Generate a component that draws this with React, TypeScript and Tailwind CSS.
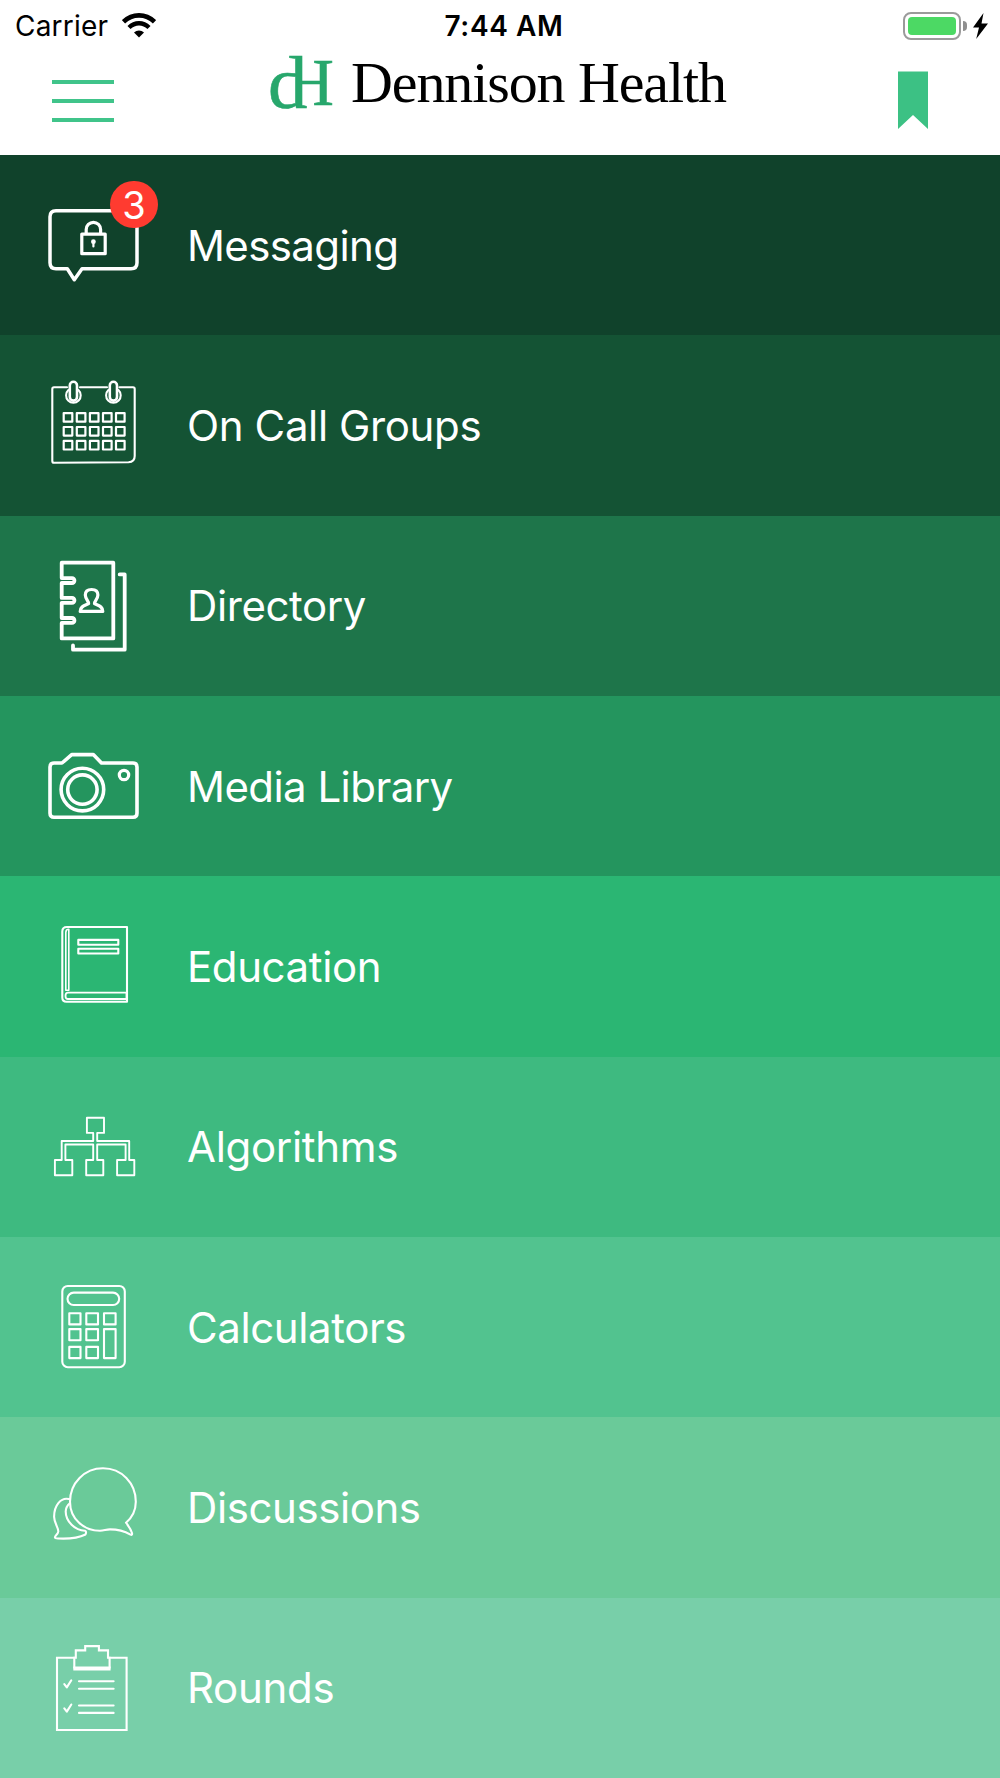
import React from 'react';

type IconProps = { children: React.ReactNode; stroke?: number };

const Icon: React.FC<IconProps> = ({ children, stroke = 2.1 }) => (
  <svg
    viewBox="0 -0.5 100 100"
    className="h-[100px] w-[100px] shrink-0 overflow-visible"
    fill="none"
    stroke="white"
    strokeWidth={stroke}
    strokeLinejoin="round"
    strokeLinecap="round"
  >
    {children}
  </svg>
);

const MessagingIcon = () => (
  <Icon stroke={3.5}>
    <path d="M16 15.3H91Q97 15.3 97 21.3V67.3Q97 73.3 91 73.3H42L34.3 84.2L27.3 73.3H16Q10 73.3 10 67.3V21.3Q10 15.3 16 15.3Z" />
    <g strokeWidth={3.2}>
      <rect x="41.8" y="38.6" width="23.4" height="19.6" />
      <path d="M46.2 38V34A7.2 7.2 0 0 1 60.6 34V38" />
    </g>
    <circle cx="53.4" cy="46.2" r="2.4" fill="white" stroke="none" />
    <path d="M53.4 47V51" strokeWidth={2.2} />
  </Icon>
);

const CalendarIcon = () => (
  <Icon>
    <path d="M27 11.8H14Q12.3 11.8 12.3 13.5V85.5Q12.3 87.3 14 87.3L88.5 86.8Q94.7 86.5 94.7 80.5V13.5Q94.7 11.8 93 11.8H79.5M40 11.8H67" />
    {[33.4, 73.4].map((x) => (
      <g key={x}>
        <rect x={x - 3.6} y="6.3" width="7.2" height="18.8" rx="3.6" strokeWidth={2.6} />
        <path d={`M${x - 5} 14.5A7.3 7.3 0 1 0 ${x + 5} 14.5`} />
      </g>
    ))}
    {[37.6, 51.5, 65.4].map((y) =>
      [23.7, 36.8, 49.9, 63, 76].map((x) => (
        <rect key={`${x}-${y}`} x={x} y={y} width="8.6" height="8.6" strokeWidth={2.2} />
      ))
    )}
  </Icon>
);

const DirectoryIcon = () => (
  <Icon stroke={3.8}>
    <path d="M32 21.6H21.7V6.2H73.3V81.9H21.7V66.4H32A2.45 2.45 0 0 0 32 61.5H21.7V46.3H32A2.45 2.45 0 0 0 32 41.4H21.7V26.5H32A2.45 2.45 0 0 0 32 21.6" />
    <path d="M79.7 17.9H84.7V93.2H33V89" />
    <path
      d="M40.2 54.9H62.8C62.8 49.5 58 49 54.4 47C53.8 45.5 57.9 43 57.9 38.6C57.9 35 55.4 33 51.6 33C47.8 33 45.3 35 45.3 38.6C45.3 43 49.3 45.5 48.7 47C45 49 40.2 49.5 40.2 54.9Z"
      strokeWidth={3.2}
    />
  </Icon>
);

const CameraIcon = () => (
  <Icon stroke={3.6}>
    <path d="M14 26.5H22L31.7 18.1H53.3L61.5 26.5H93Q97 26.5 97 30.5V76.8Q97 80.8 93 80.8H14Q10 80.8 10 76.8V30.5Q10 26.5 14 26.5Z" />
    <circle cx="42.4" cy="53.1" r="21.3" />
    <circle cx="42.4" cy="53.1" r="14.7" />
    <circle cx="84" cy="38.5" r="4.7" strokeWidth={3.2} />
  </Icon>
);

const BookIcon = () => (
  <Icon>
    <path d="M87 10.5H27Q22.3 10.5 22.3 15V81Q22.3 85.2 26.5 85.2H87Z" />
    <path d="M28.8 12.8V73.8H25.8V16Q25.8 12.8 28.8 12.8Z" strokeWidth={1.6} />
    <path d="M86.5 76.2H28Q25.5 76.2 25.5 79.4Q25.5 82.5 28 82.5H86.5Z" strokeWidth={1.8} />
    <rect x="38.3" y="23.4" width="40" height="4.8" />
    <rect x="38.3" y="32.2" width="40" height="4.8" />
  </Icon>
);

const AlgorithmIcon = () => (
  <Icon stroke={1.9}>
    <path d="M46.9 20.2H64V35.4H57.2V43.5H89.2V62.5H94.3V77.8H77.1V62.5H85.6V47H57.2V62.5H63.3V77.8H46.2V62.5H53.2V47H25.4V62.5H32.3V77.8H14.9V62.5H21.7V43.5H53.2V35.4H46.9Z" />
  </Icon>
);

const CalculatorIcon = () => (
  <Icon>
    <rect x="22.3" y="8.5" width="62.5" height="81.2" rx="5.5" />
    <rect x="27.5" y="15.1" width="51.7" height="12.4" rx="6.2" />
    {[35.7, 51.6, 69.4].map((y) => (
      <g key={y}>
        <rect x="29.3" y={y} width="11.2" height="11.2" />
        <rect x="46.3" y={y} width="11.7" height="11.2" />
      </g>
    ))}
    <rect x="64" y="35.7" width="11.6" height="11.2" />
    <rect x="64" y="51.6" width="11.6" height="29" />
  </Icon>
);

const DiscussionIcon = () => (
  <Icon>
    <path d="M86 65.2C92 60 95.8 53 95.8 44.2C95.8 25.5 81.5 10.8 63 10.8C44.5 10.8 30 25.5 30 44.2C30 61 43.5 73.3 60 73.3C64 73.3 66 71.9 70 71.9C78 71.9 85 74 90.5 77.1Q92.5 78 92 75.5Q90.5 71 86 65.2Z" />
    <path d="M29 41.6C21 39.5 14.1 48 14.1 59.2C14.1 65.5 18.5 70 18.3 74C18 77 14.7 78 14.9 80Q15 80.9 18 81C28 81.5 38.5 80.5 45.5 77Q46.8 73.6 45 73.3C35 73 25.7 64 25.7 54Q26 49 29.5 46" />
  </Icon>
);

const ClipboardIcon = () => (
  <Icon>
    <g strokeLinejoin="miter" strokeLinecap="butt">
      <path d="M35 19.3H17V91.5H86.6V19.3H68.6" />
      <path d="M34.3 30V19.3H35.8V11.9H45.2V7.6H58.9V11.9H68V19.3H69.6V30" strokeWidth={2.1} />
      <path d="M33.3 30H70.6" strokeWidth={3.8} />
    </g>
    {[0, 24.2].map((dy) => (
      <g key={dy} transform={`translate(0 ${dy})`}>
        <path d="M24.3 45.7L26.8 48.9L31.3 41.8" />
        <path d="M39 42.8H73.6M39 50.2H73.6" />
      </g>
    ))}
  </Icon>
);

const items = [
  { label: 'Messaging', bg: 'bg-[#10422b]', tracking: 'tracking-[-0.6px]', icon: <MessagingIcon />, badge: 3 },
  { label: 'On Call Groups', bg: 'bg-[#145334]', tracking: 'tracking-[-0.38px]', icon: <CalendarIcon /> },
  { label: 'Directory', bg: 'bg-[#1e754a]', tracking: 'tracking-[-0.4px]', icon: <DirectoryIcon /> },
  { label: 'Media Library', bg: 'bg-[#24955e]', tracking: 'tracking-[-0.55px]', icon: <CameraIcon /> },
  { label: 'Education', bg: 'bg-[#2bb673]', tracking: 'tracking-[-0.4px]', icon: <BookIcon /> },
  { label: 'Algorithms', bg: 'bg-[#3eba80]', tracking: 'tracking-[-0.32px]', icon: <AlgorithmIcon /> },
  { label: 'Calculators', bg: 'bg-[#52c38f]', tracking: 'tracking-[-0.4px]', icon: <CalculatorIcon /> },
  { label: 'Discussions', bg: 'bg-[#6aca99]', tracking: 'tracking-[-0.42px]', icon: <DiscussionIcon /> },
  { label: 'Rounds', bg: 'bg-[#78cfa9]', tracking: 'tracking-[-0.3px]', icon: <ClipboardIcon /> },
];

const StatusBar = () => (
  <div className="grid h-[50px] grid-cols-[1fr_auto_1fr] items-center pt-px text-[28px] leading-none text-black">
    <div className="flex items-center gap-3.5 pl-[15px]">
      <span className="tracking-[0.2px]">Carrier</span>
      <svg viewBox="0 0 34 25" className="h-[25px] w-[34px]" fill="none" stroke="black">
        <path d="M1.5 8.8C10.3 0.2 23.7 0.2 32.5 8.8" strokeWidth="4.6" />
        <path d="M7 14.5C12.8 8.9 21.2 8.9 27 14.5" strokeWidth="4.4" />
        <path d="M17 24.5L12 19.5C14.8 16.8 19.2 16.8 22 19.5Z" fill="black" stroke="none" />
      </svg>
    </div>
    <span className="ml-2 font-semibold tracking-[0.6px]">7:44 AM</span>
    <div className="flex items-center justify-end pr-3">
      <div className="h-[28px] w-[58px] rounded-[8px] border-2 border-[#9b9b9b] p-[3px]">
        <div className="h-full w-full rounded-[4px] bg-[#4cd964]" />
      </div>
      <div className="ml-[2px] h-[10px] w-[4px] rounded-r-full bg-[#8f8f8f]" />
      <svg viewBox="0 0 15 26" className="ml-[6px] h-[26px] w-[15px]">
        <path d="M10.5 0L0 14.5H6L3.2 26L15 10.5H8.5Z" fill="black" />
      </svg>
    </div>
  </div>
);

// The H shares its left stem with the d, so only its crossbar and right stem show
const LogoMark = () => (
  <svg
    viewBox="0 0 66 64"
    className="h-[64px] w-[66px] overflow-visible"
    fill="#27a76c"
    stroke="#27a76c"
    strokeWidth="0.6"
    fontFamily="Liberation Serif, serif"
  >
    <clipPath id="stem">
      <path d="M38 0H70V64H38V40H31V24H38Z" />
    </clipPath>
    <text x="0" y="58.3" fontSize="75" textLength="39.4" lengthAdjust="spacingAndGlyphs">d</text>
    <g clipPath="url(#stem)">
      <text x="17.5" y="54.6" fontSize="67">H</text>
    </g>
  </svg>
);

const NavBar = () => (
  <div className="flex h-[105px] items-start pr-[72px] pl-[52px]">
    <div className="mt-[30px] flex w-[62px] flex-col gap-[15px]">
      <div className="h-1 bg-[#40c48a]" />
      <div className="h-1 bg-[#40c48a]" />
      <div className="h-1 bg-[#40c48a]" />
    </div>
    <div className="ml-[154px] flex items-start">
      <LogoMark />
      <span className="ml-[17px] font-['Liberation_Serif',serif] text-[58px] leading-[66px] tracking-[-1.1px] whitespace-nowrap text-black">
        Dennison Health
      </span>
    </div>
    <svg viewBox="0 0 30 58" className="mt-[21px] ml-auto h-[58px] w-[30px]">
      <path d="M0 0.5H30V58L15 44L0 58Z" fill="#3cc184" />
    </svg>
  </div>
);

const App: React.FC = () => (
  <div className="flex h-[1778px] w-[1000px] flex-col overflow-hidden bg-white font-['Inter','Liberation_Sans',sans-serif]">
    <header className="h-[155px] shrink-0">
      <StatusBar />
      <NavBar />
    </header>
    <nav className="flex flex-1 flex-col">
      {items.map(({ label, bg, tracking, icon, badge }) => (
        <a key={label} className={`flex flex-1 items-center pl-10 ${bg}`}>
          <div className="relative">
            {icon}
            {badge && (
              <span className="absolute top-[-14px] left-[70px] flex h-[47px] w-[48px] items-center justify-center rounded-full bg-[#ff3b30] text-[38px] leading-none text-white">
                {badge}
              </span>
            )}
          </div>
          <span className={`mt-px ml-[47px] text-[42px] leading-none whitespace-nowrap text-white ${tracking}`}>{label}</span>
        </a>
      ))}
    </nav>
  </div>
);

export default App;
